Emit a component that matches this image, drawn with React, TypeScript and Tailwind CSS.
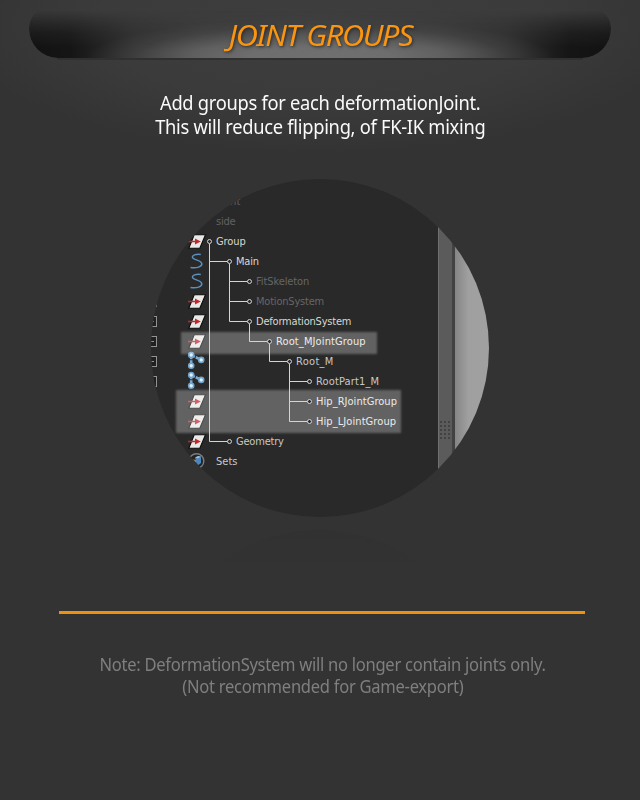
import React from "react";

type IconKind = "group" | "curve" | "joint" | "set" | "none";
type Row = { label: string; icon: IconKind; cls: string };

const rows: Row[] = [
  { label: "front", icon: "none", cls: "pl-[65px] text-[#626262] tracking-[0.2px]" },
  { label: "side", icon: "none", cls: "pl-[65px] text-[#626262] tracking-[-0.2px]" },
  { label: "Group", icon: "group", cls: "pl-[65px] text-[#d8d8d0] tracking-[-0.1px]" },
  { label: "Main", icon: "curve", cls: "pl-[85px] text-[#d8d8d8] tracking-[-0.2px]" },
  { label: "FitSkeleton", icon: "curve", cls: "pl-[105px] text-[#666666] tracking-[-0.1px]" },
  { label: "MotionSystem", icon: "group", cls: "pl-[105px] text-[#666666] tracking-[-0.2px]" },
  { label: "DeformationSystem", icon: "group", cls: "pl-[105px] text-[#d8d8d0] tracking-[-0.2px]" },
  { label: "Root_MJointGroup", icon: "group", cls: "pl-[125px] text-[#e4e4e4] tracking-[0.12px]" },
  { label: "Root_M", icon: "joint", cls: "pl-[145px] text-[#c8c8c8] tracking-[0.3px]" },
  { label: "RootPart1_M", icon: "joint", cls: "pl-[165px] text-[#c8c8c8] tracking-[0.15px]" },
  { label: "Hip_RJointGroup", icon: "group", cls: "pl-[165px] text-[#e4e4e4] tracking-[0.05px]" },
  { label: "Hip_LJointGroup", icon: "group", cls: "pl-[165px] text-[#e4e4e4] tracking-[0.08px]" },
  { label: "Geometry", icon: "group", cls: "pl-[85px] text-[#c8c8c0] tracking-[-0.2px]" },
  { label: "Sets", icon: "set", cls: "pl-[65px] text-[#c8c8c8] tracking-[0px]" },
];

function RowIcon({ kind }: { kind: IconKind }) {
  if (kind === "none") return null;
  return (
    <svg className="absolute left-[36px] top-[-1px]" width="20" height="20" viewBox="0 0 20 20">
      {kind === "group" && (
        <>
          <path d="M7.2 3.8h11.3L12.8 17.3H1.8z" fill="#e8e8e6" stroke="#0b0b0b" strokeWidth="1.1" />
          <path d="M1 10.4h9" stroke="#c4262c" strokeWidth="1.5" />
          <path d="M8 7.4l5.8 3L8 13.4z" fill="#c4262c" />
        </>
      )}
      {kind === "curve" && (
        <path
          d="M13.8 3.4C9 2.8 4.6 4.2 5.6 6.8c.9 2.2 8.8 2.2 9.2 5.9.3 3-5 4.8-11.3 3.8"
          fill="none"
          stroke="#5b90bd"
          strokeWidth="1.5"
        />
      )}
      {kind === "joint" && (
        <>
          <path d="M4.2 4.2v10.5M4.2 4.2l10 4.6" stroke="#7fabd0" strokeWidth="2.6" strokeDasharray="4 1" />
          <g fill="#e0f1fd" stroke="#6fa3cd" strokeWidth="1.6">
            <circle cx="4.2" cy="4" r="2.5" />
            <circle cx="14.2" cy="8.9" r="2.5" />
            <circle cx="4.2" cy="14.8" r="2.5" />
          </g>
        </>
      )}
      {kind === "set" && (
        <>
          <circle cx="9.5" cy="10" r="7.3" fill="#242424" stroke="#7c7c7c" strokeWidth="1.4" />
          <path d="M3 8l6 1v6z" fill="#a28d55" />
          <path d="M8 6.5l6-1v6.5l-4 3z" fill="#4c86bd" />
          <path d="M8 6.5l3-1.5 3 .5-3 1.8z" fill="#9cc6e8" />
        </>
      )}
    </svg>
  );
}

const nodes = [
  [58, 62], [78, 82], [98, 102], [98, 122], [98, 142], [118, 162],
  [138, 182], [158, 202], [158, 222], [158, 242], [78, 262],
];

function Branches() {
  return (
    <svg className="absolute left-0 top-0" width="338" height="338" viewBox="0 0 338 338" fill="none" stroke="#d4d4d4">
      <path d="M58.5 64.5v198h18M58.5 82.5h18M78.5 84.5v58h18M78.5 102.5h18M78.5 122.5h18M98.5 144.5v18h18M118.5 164.5v18h18M138.5 184.5v58h18M138.5 202.5h18M138.5 222.5h18" />
      {nodes.map(([x, y]) => (
        <circle key={`${x}-${y}`} cx={x + 0.5} cy={y + 0.5} r="2" fill="#2a2a2a" />
      ))}
      <g stroke="#929292">
        {[122, 142, 162, 182, 202].map((y) => (
          <g key={y}>
            <rect x="-4.5" y={y - 4.5} width="10" height="10" fill="#202020" />
            <path d={`M-2 ${y + 0.5}h5`} />
          </g>
        ))}
      </g>
    </svg>
  );
}

function Outliner() {
  return (
    <div className="relative ml-[151px] h-[338px] w-[338px] overflow-hidden rounded-full bg-[#292929]">
      <div className="flex h-full">
        <div
          className="w-[287px] shrink-0 pt-[13px] text-[11px] leading-5"
          style={{ fontFamily: '"DejaVu Sans Condensed", "DejaVu Sans", sans-serif', fontStretch: "condensed" }}
        >
          {rows.map((r) => (
            <div key={r.label} className={`relative h-5 whitespace-nowrap ${r.cls}`}>
              <RowIcon kind={r.icon} />
              <span>{r.label}</span>
            </div>
          ))}
        </div>
        <div className="w-[14px] shrink-0 border-l border-[#707070] bg-[#5b5b5b] pl-px pt-[242px]">
          <div className="grid w-3 grid-cols-3 gap-y-[2px]">
            {Array.from({ length: 15 }, (_, i) => (
              <i key={i} className="h-[2px] w-[2px] bg-[#424242]" />
            ))}
          </div>
        </div>
        <div className="w-[3px] shrink-0 bg-[#424242]" />
        <div className="grow bg-linear-to-r from-[#858585] via-[#a0a0a0] via-40% to-[#a0a0a0]" />
      </div>
      <div className="absolute left-[30px] top-[153px] h-[22px] w-[196px] bg-white/27 blur-[1px]" />
      <div className="absolute left-[25px] top-[211px] h-[43px] w-[225px] bg-white/27 blur-[1px]" />
      <Branches />
    </div>
  );
}

export default function App() {
  return (
    <main
      className="h-[800px] w-[640px] overflow-hidden bg-[#333333] bg-[radial-gradient(ellipse_370px_130px_at_320px_24px,#3e3e3e_0%,#3b3b3b_60%,#333333_100%)]"
      style={{ fontFamily: '"Noto Sans", sans-serif' }}
    >
      <header className="mx-auto h-[59px] w-[582px] pt-2">
        <div className="relative h-[50px]">
          <div className="absolute inset-0 overflow-hidden rounded-b-[29px] rounded-t-[20px] [mask-image:linear-gradient(180deg,transparent_6%,#00000070_30%,#000000c0_50%,#000000_80%)]">
            <div className="absolute inset-0 bg-[linear-gradient(90deg,#121212_0%,#151515_7%,#303030_18%,#3c3c3c_30%,#404040_50%,#3c3c3c_70%,#303030_82%,#151515_93%,#121212_100%)]" />
            <div className="absolute inset-0 bg-[radial-gradient(ellipse_235px_40px_at_50%_100%,#707070_0%,#6e6e6e_30%,#6a6a6ac0_55%,#58585850_80%,#44444400_100%)]" />
          </div>
          <div className="absolute inset-x-[28px] top-full h-[2px] bg-[#303030]" />
          <h1 className="relative flex h-[53px] items-center justify-center whitespace-nowrap text-[29px] font-normal italic tracking-[-1.3px] text-[#fa9511] [text-shadow:1px_1px_3px_#2a2a2a]">
            <span className="ml-[2px] inline-block scale-x-[1.06]">JOINT GROUPS</span>
          </h1>
        </div>
      </header>
      <section className="mt-8 flex h-12 flex-col items-center whitespace-nowrap text-[19px] leading-6 text-[#fafafa]">
        <p className="scale-x-[0.964] tracking-[-0.3px]">Add groups for each deformationJoint.</p>
        <p className="scale-x-[0.964] tracking-[-0.3px]">This will reduce flipping, of FK-IK mixing</p>
      </section>
      <div className="mt-10">
        <Outliner />
      </div>
      <div className="ml-[191px] mt-[13px] h-[60px] w-[256px] overflow-hidden">
        <div className="ml-[-41px] h-[338px] w-[338px] rounded-full bg-linear-to-b from-[#313131] to-[#333333] to-11%" />
      </div>
      <div className="ml-[59px] mt-[21px] h-[3px] w-[526px] bg-[#ef9110]" />
      <footer className="ml-[5px] mt-[39px] flex flex-col items-center whitespace-nowrap text-[18px] leading-[22px] text-[#7f7f7f]">
        <p className="scale-x-[0.92] tracking-[-0.3px]">Note: DeformationSystem will no longer contain joints only.</p>
        <p className="scale-x-[0.92] tracking-[-0.3px]">(Not recommended for Game-export)</p>
      </footer>
    </main>
  );
}
